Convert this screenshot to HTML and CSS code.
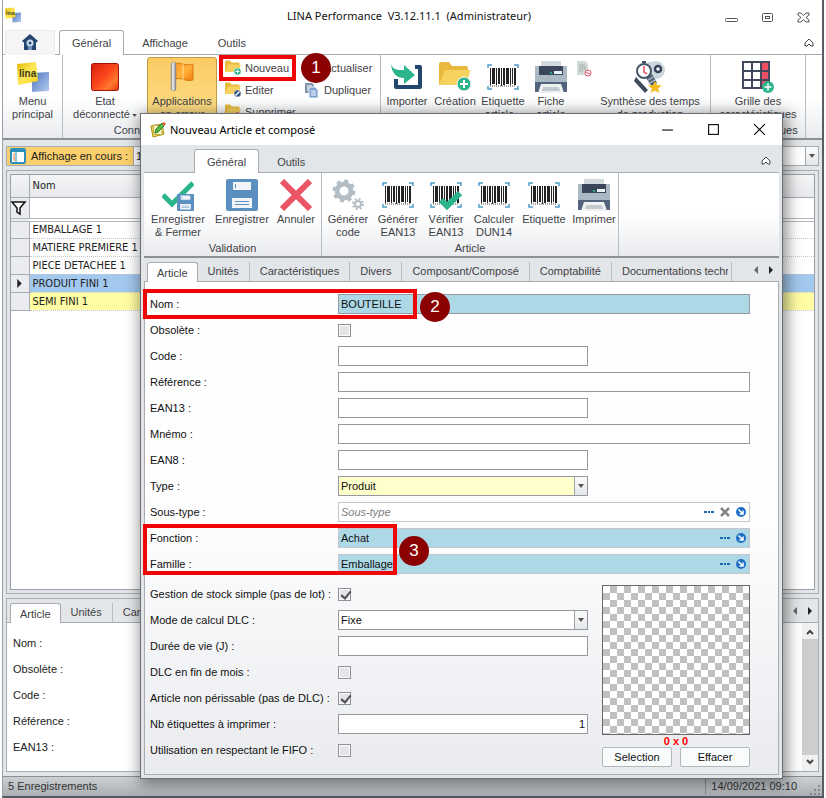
FILE: index.html
```html
<!DOCTYPE html>
<html lang="fr">
<head>
    <meta charset="UTF-8">
    <meta name="viewport" content="width=device-width, initial-scale=1.0">
    <title>LINA Performance</title>
    <link rel="stylesheet" href="styles.css">
</head>
<body>

<!-- Icônes partagées -->
<svg class="sprite" aria-hidden="true">
    <defs>
        <linearGradient id="g-red" x1="0" y1="0" x2="1" y2="1">
            <stop offset="0" stop-color="#d81e0e"/><stop offset=".5" stop-color="#fb4a1c"/><stop offset=".75" stop-color="#ff7a2e"/><stop offset="1" stop-color="#ee3410"/>
        </linearGradient>
        <linearGradient id="g-flag" x1="0" y1="0" x2="1" y2="1">
            <stop offset="0" stop-color="#ff9a1f"/><stop offset=".5" stop-color="#ffb43c"/><stop offset="1" stop-color="#f07c06"/>
        </linearGradient>
        <linearGradient id="g-pole" x1="0" y1="0" x2="1" y2="0">
            <stop offset="0" stop-color="#8d8d8d"/><stop offset=".4" stop-color="#f4f4f4"/><stop offset="1" stop-color="#777"/>
        </linearGradient>
        <linearGradient id="g-yellow" x1="0" y1="0" x2="1" y2="1">
            <stop offset="0" stop-color="#e3b800"/><stop offset=".5" stop-color="#ffe95a"/><stop offset="1" stop-color="#f0cc10"/>
        </linearGradient>
        <linearGradient id="g-blue" x1="0" y1="0" x2="1" y2="1">
            <stop offset="0" stop-color="#4f74bd"/><stop offset="1" stop-color="#b4cdf2"/>
        </linearGradient>
    </defs>
    <symbol id="i-lina" viewBox="0 0 32 32">
        <path d="M15 12l17-1v19l-17 1z" fill="url(#g-blue)"/>
        <path d="M0 3L19 1l2 19-20 4z" fill="url(#g-yellow)"/>
        <text x="2" y="16" font-family="Liberation Sans" font-weight="bold" font-size="10" fill="#3c3d20">lina</text>
    </symbol>
    <symbol id="i-home" viewBox="0 0 16 16">
        <path d="M8 0l8 7-1.500 1.500L14 8v8H2V8l-.5.500L0 7z" fill="#24466e"/>
        <circle cx="8" cy="9" r="3.500" fill="#c8dcf0"/><circle cx="8" cy="9" r="1.500" fill="#24466e"/><path d="M6 12h4v4H6z" fill="#6f94bd"/>
    </symbol>
    <symbol id="i-state" viewBox="0 0 32 32">
        <rect x="2.500" y="2.500" width="27" height="27" rx="2" fill="url(#g-red)" stroke="#9c1408"/>
    </symbol>
    <symbol id="i-flag" viewBox="0 0 32 32">
        <path d="M9 3c5-3 8 3 18 0v16c-8 2-11-3-17-1z" fill="url(#g-flag)" stroke="#d67a10"/>
        <path d="M17 3v16" stroke="#ffd890"/>
        <rect x="5" y="1" width="5" height="29" rx="2.500" fill="url(#g-pole)" stroke="#888" stroke-width=".5"/>
    </symbol>
    <symbol id="i-folder" viewBox="0 0 32 32">
        <path d="M0 3q0-2 2-2h8l3 4h14q2 0 2 2v17H0z" fill="#e8b93c"/>
        <path d="M0 24L6 9h24q2 0 1 2l-4 13z" fill="#f5d25d"/>
    </symbol>
    <symbol id="i-folder-add" viewBox="0 0 32 32">
        <use href="#i-folder"/>
        <circle cx="25" cy="23" r="7" fill="#2cb48c" stroke="#fff"/><path d="M21 23h8M25 19v8" stroke="#fff" stroke-width="2"/>
    </symbol>
    <symbol id="i-folder-edit" viewBox="0 0 32 32">
        <use href="#i-folder"/>
        <circle cx="25" cy="23" r="7" fill="#2f4d86" stroke="#fff"/><path d="M21 27l8-8" stroke="#fff" stroke-width="3"/>
    </symbol>
    <symbol id="i-folder-del" viewBox="0 0 32 32">
        <use href="#i-folder"/>
        <circle cx="25" cy="23" r="7" fill="#e0202c" stroke="#fff"/><path d="M21 23h8" stroke="#fff" stroke-width="2"/>
    </symbol>
    <symbol id="i-copy" viewBox="0 0 16 16">
        <path d="M1 1h7l2 2v8H1z" fill="#8295ad"/><path d="M3 4h5M3 6h5M3 8h3" stroke="#fff"/>
        <path d="M5 5h6l3 3v8H5z" fill="#7da0cf" stroke="#eef3fa"/><path d="M7 9h5M7 11h5M7 13h5" stroke="#fff"/>
    </symbol>
    <symbol id="i-import" viewBox="0 0 32 32">
        <path d="M24 6h5v20H5v-8" fill="none" stroke="#24466e" stroke-width="4" stroke-linejoin="round"/>
        <path d="M0 3c2 6 6 6 13 6V4l11 10-11 9v-6C6 17 1 13 0 3z" fill="#2cb48c"/>
    </symbol>
    <symbol id="i-barcode" viewBox="0 0 32 32">
        <path d="M1 7V4h4M27 4h4v3M1 25v3h4M27 28h4v-3" fill="none" stroke="#4b9cc9" stroke-width="1.500"/>
        <path d="M3 7h1v17H3zM5 7h3v16H5zM9 7h1v17H9zM11 7h2v16h-2zM14 7h1v18h-1zM16 7h2v17h-2zM19 7h3v16h-3zM23 7h1v17h-1zM25 7h1v16h-1zM27 7h2v17h-2z" fill="#222"/>
        <path d="M3 25h26" stroke="#444" stroke-dasharray="1 1"/>
    </symbol>
    <symbol id="i-barcode-ok" viewBox="0 0 32 32">
        <use href="#i-barcode"/>
        <path d="M11 21l6 6 13-13" fill="none" stroke="#2cb48c" stroke-width="6"/>
    </symbol>
    <symbol id="i-printer" viewBox="0 0 32 32">
        <path d="M6 0h20v6H6z" fill="#d3dade"/>
        <path d="M0 5h32v16H0z" fill="#a9b8c3"/><path d="M0 21h32v10H0z" fill="#51647b"/>
        <path d="M4 5h24v9H4z" fill="#39465c"/><path d="M19 10h8v3h-8z" fill="#e9f2f5"/><circle cx="16" cy="12" r="1" fill="#2cc48c"/>
        <path d="M6 23h20l3 9H3z" fill="#eef0f2"/><path d="M8 27h16M7 29h18" stroke="#9aa3ab"/>
    </symbol>
    <symbol id="i-report" viewBox="0 0 16 16">
        <path d="M1 0h8l3 3v11H1z" fill="#d3dbd7"/><path d="M3 4h6M3 6h7M3 8h7M3 10h4" stroke="#a4b0aa"/>
        <circle cx="12" cy="12" r="3" fill="#fff" stroke="#e5566d"/><path d="M10 11l4 2" stroke="#e5566d"/>
    </symbol>
    <symbol id="i-times" viewBox="0 0 32 32">
        <circle cx="22" cy="9" r="9" fill="#ccd7dd"/><path d="M13 1h9l8 12-9 6z" fill="#ccd7dd"/>
        <circle cx="24" cy="8" r="3" fill="#fff" stroke="#34425a" stroke-width="2.500"/>
        <path d="M2 16l12 13-3 3L0 20z" fill="#3f4b5d"/><path d="M12 17l6-4 5 9-5 4z" fill="#55667a"/>
        <path d="M13 20l6-4M14 23l7-4" stroke="#d3dce2"/>
        <circle cx="10" cy="10" r="7" fill="#fff" stroke="#46566a" stroke-width="2"/><path d="M8 1h4M10 1v2" stroke="#46566a" stroke-width="2"/>
        <path d="M10 5v6l3 2" fill="none" stroke="#e6435c" stroke-width="1.500"/>
        <path d="M21 20l2 4 5 .500-4 3 1.500 4.500-4.500-2.500-4.500 2.500 1.500-4.500-4-3 5-.500z" fill="#f3bd22"/>
    </symbol>
    <symbol id="i-grid-add" viewBox="0 0 32 32">
        <path d="M1 1h26v26H1z" fill="#fff"/><path d="M19 1h8v26h-8z" fill="#ee4f62"/>
        <path d="M1 1h26v26H1zM10 1v26M19 1v26M1 10h26M1 19h26" fill="none" stroke="#44485c" stroke-width="2"/>
        <circle cx="26" cy="26" r="6" fill="#2cb48c"/><path d="M22.500 26h7M26 22.500v7" stroke="#fff" stroke-width="1.500"/>
    </symbol>
    <symbol id="i-disk" viewBox="0 0 32 32">
        <rect width="32" height="32" rx="2" fill="#5b8fc0"/>
        <path d="M7 3h18v8H7zM6 19h20v10H6z" fill="#f1f5f8"/><path d="M9 5h1v4H9zM9 22h14v1H9zM9 25h14v1H9z" fill="#5b8fc0"/>
    </symbol>
    <symbol id="i-save-close" viewBox="0 0 32 32">
        <path d="M1 16l9 9L31 4" fill="none" stroke="#2cb48c" stroke-width="5"/>
        <use href="#i-disk" x="15" y="15" width="17" height="17"/>
    </symbol>
    <symbol id="i-cancel" viewBox="0 0 32 32">
        <path d="M2 2l28 28M30 2L2 30" stroke="#ec5565" stroke-width="6"/>
    </symbol>
    <symbol id="i-gears" viewBox="0 0 32 32">
        <circle cx="12" cy="12" r="10" fill="none" stroke="#b4bdc4" stroke-width="3" stroke-dasharray="4 3.850"/>
        <circle cx="12" cy="12" r="7" fill="none" stroke="#b4bdc4" stroke-width="5"/>
        <circle cx="26" cy="25" r="5" fill="none" stroke="#b4bdc4" stroke-width="2" stroke-dasharray="2 1.930"/>
        <circle cx="26" cy="25" r="3" fill="none" stroke="#b4bdc4" stroke-width="2"/>
    </symbol>
    <symbol id="i-note" viewBox="0 0 16 16">
        <path d="M1 4l11-2 2 10-11 3z" fill="#f3df55" stroke="#a98f1a"/><path d="M3 3l9 1v9l-8-1z" fill="#fbf7c4" stroke="#b8a544"/>
        <path d="M5 11l1-4 6-6 2 3-6 6z" fill="#55b948" stroke="#2e7d27"/><path d="M12 1l2-1 2 2-2 2z" fill="#e85c3c"/>
    </symbol>
    <symbol id="i-layout" viewBox="0 0 16 16">
        <rect x="1" y="1" width="14" height="14" rx="1" fill="#fff" stroke="#2c8fb8" stroke-width="2"/>
        <path d="M6 3v11" stroke="#2c8fb8"/><path d="M3 6h2M3 8h2M3 10h2M3 12h2" stroke="#e87b2c"/><path d="M1 3h14" stroke="#2c8fb8" stroke-width="2"/>
    </symbol>
    <symbol id="i-funnel" viewBox="0 0 16 16">
        <path d="M1 2h13L9 8v6l-3-2V8z" fill="#fff" stroke="#111" stroke-width="1.500"/>
    </symbol>
    <symbol id="i-chevron" viewBox="0 0 10 10">
        <path d="M1 5l4-4 4 4v3H7L5 6 3 8H1z" fill="#fff" stroke="#444"/>
    </symbol>
    <symbol id="i-down" viewBox="0 0 6 4"><path d="M0 0h6L3 4z" fill="#555"/></symbol>
    <symbol id="i-left" viewBox="0 0 4 8"><path d="M4 0v8L0 4z" fill="#666"/></symbol>
    <symbol id="i-right" viewBox="0 0 4 8"><path d="M0 0v8l4-4z" fill="#222"/></symbol>
    <symbol id="i-dots" viewBox="0 0 10 10"><path d="M0 4h3v2H0zM4 4h2v2H4zM7 4h3v2H7z" fill="#1d64b4"/></symbol>
    <symbol id="i-clear" viewBox="0 0 10 10"><path d="M1 1l8 8M9 1L1 9" stroke="#858585" stroke-width="2.500"/></symbol>
    <symbol id="i-go" viewBox="0 0 10 10"><circle cx="5" cy="5" r="5" fill="#1e6fc4"/><path d="M2.500 2.500L7 7M7 3.500V7H3.500" fill="none" stroke="#fff" stroke-width="1.500"/></symbol>
</svg>

<div class="app">
    <header class="titlebar">
        <svg class="icon16"><use href="#i-lina"/></svg>
        <h1>LINA Performance  V3.12.11.1  (Administrateur)</h1>
        <div class="window-buttons">
            <button type="button" aria-label="Réduire"><svg viewBox="0 0 13 12"><rect x=".5" y="6.500" width="12" height="3" rx="1" fill="#fff" stroke="#555"/></svg></button>
            <button type="button" aria-label="Agrandir"><svg viewBox="0 0 13 12"><rect x="1.500" y="1.500" width="10" height="8" rx="1" fill="#fff" stroke="#555"/><rect x="4.500" y="4.500" width="4" height="2" fill="none" stroke="#555"/></svg></button>
            <button type="button" aria-label="Fermer"><svg viewBox="0 0 13 12"><path d="M1 1h3l2.500 2.500L9 1h3v2L9 5.500 12 8v2H9L6.500 7.500 4 10H1V8l3-2.500L1 3z" fill="#fff" stroke="#555"/></svg></button>
        </div>
    </header>

    <nav class="ribbon-tabs">
        <a href="#" class="home" aria-label="Accueil"><svg class="icon16"><use href="#i-home"/></svg></a>
        <a href="#" class="active">Général</a>
        <a href="#">Affichage</a>
        <a href="#">Outils</a>
        <button type="button" class="collapse" aria-label="Réduire le ruban"><svg><use href="#i-chevron"/></svg></button>
    </nav>

    <div class="ribbon">
        <div class="group">
            <div class="tools">
                <button type="button" class="tool w59"><svg><use href="#i-lina"/></svg><span>Menu<br>principal</span></button>
            </div>
        </div>
        <div class="group no-line">
            <div class="tools">
                <button type="button" class="tool w84"><svg><use href="#i-state"/></svg><span>Etat<br>déconnecté<svg class="caret"><use href="#i-down"/></svg></span></button>
                <button type="button" class="tool w70 on"><svg><use href="#i-flag"/></svg><span>Applications<br>en erreur</span></button>
            </div>
            <div class="caption">Connexion</div>
        </div>
        <div class="group columns">
            <div class="small-tools">
                <button type="button"><svg><use href="#i-folder-add"/></svg>Nouveau</button>
                <button type="button"><svg><use href="#i-folder-edit"/></svg>Editer</button>
                <button type="button"><svg><use href="#i-folder-del"/></svg>Supprimer</button>
                <i class="frame frame-1"></i>
            </div>
            <div class="small-tools second">
                <button type="button"><svg><use href="#i-copy"/></svg>Actualiser</button>
                <button type="button"><svg><use href="#i-copy"/></svg>Dupliquer</button>
                <b class="step step-1">1</b>
            </div>
        </div>
        <div class="group">
            <div class="tools pad">
                <button type="button" class="tool w48"><svg><use href="#i-import"/></svg><span>Importer</span></button>
                <button type="button" class="tool w48"><svg><use href="#i-folder-add"/></svg><span>Création<br><svg class="caret"><use href="#i-down"/></svg></span></button>
                <button type="button" class="tool w48"><svg><use href="#i-barcode"/></svg><span>Etiquette<br>article<svg class="caret"><use href="#i-down"/></svg></span></button>
                <button type="button" class="tool w48"><svg><use href="#i-printer"/></svg><span>Fiche<br>article</span></button>
                <button type="button" class="tool mini" aria-label="Rapport"><svg><use href="#i-report"/></svg></button>
                <button type="button" class="tool w114"><svg><use href="#i-times"/></svg><span>Synthèse des temps<br>de production</span></button>
            </div>
        </div>
        <div class="group">
            <div class="tools">
                <button type="button" class="tool w94"><svg><use href="#i-grid-add"/></svg><span>Grille des<br>caractéristiques</span></button>
            </div>
            <div class="caption">Caractéristiques</div>
        </div>
    </div>

    <main class="workspace">
        <div class="view-bar">
            <label for="view"><svg class="icon16"><use href="#i-layout"/></svg>Affichage en cours :</label>
            <div class="combo">
                <select id="view"><option>1</option></select>
                <span class="drop"><svg><use href="#i-down"/></svg></span>
            </div>
        </div>

        <div class="list-box">
            <div class="list">
                <table>
                    <thead>
                        <tr class="head"><th></th><th>Nom</th></tr>
                        <tr class="filter"><th><svg class="icon16"><use href="#i-funnel"/></svg></th><td></td></tr>
                    </thead>
                    <tbody>
                        <tr><th></th><td>EMBALLAGE 1</td></tr>
                        <tr><th></th><td>MATIERE PREMIERE 1</td></tr>
                        <tr><th></th><td>PIECE DETACHEE 1</td></tr>
                        <tr class="selected"><th><svg class="mark"><use href="#i-right"/></svg></th><td>PRODUIT FINI 1</td></tr>
                        <tr class="semi"><th></th><td>SEMI FINI 1</td></tr>
                    </tbody>
                </table>
            </div>
        </div>

        <section class="detail">
            <nav class="page-tabs">
                <a href="#" class="active">Article</a>
                <a href="#">Unités</a>
                <a href="#">Caractéristiques</a>
                <span class="tab-arrows"><svg><use href="#i-left"/></svg><svg><use href="#i-right"/></svg></span>
            </nav>
            <div class="detail-body">
                <ul>
                    <li>Nom :</li>
                    <li>Obsolète :</li>
                    <li>Code :</li>
                    <li>Référence :</li>
                    <li>EAN13 :</li>
                </ul>
                <div class="scroll">
                    <svg viewBox="0 0 8 6"><path d="M1 5l3-3 3 3" fill="none" stroke="#444" stroke-width="2"/></svg>
                    <span class="thumb"></span>
                    <svg viewBox="0 0 8 6"><path d="M1 1l3 3 3-3" fill="none" stroke="#444" stroke-width="2"/></svg>
                </div>
            </div>
        </section>
    </main>

    <footer class="status">
        <span>5 Enregistrements</span>
        <time>14/09/2021 09:10</time>
        <svg class="grip" viewBox="0 0 12 12"><path d="M9 1h2v2H9zM5 5h2v2H5zM9 5h2v2H9zM1 9h2v2H1zM5 9h2v2H5zM9 9h2v2H9z" fill="#85898f"/></svg>
    </footer>
</div>

<div class="dialog" role="dialog" aria-labelledby="dialog-title">
    <header class="dialog-title">
        <svg class="icon16"><use href="#i-note"/></svg>
        <h2 id="dialog-title">Nouveau Article et composé</h2>
        <div class="dialog-buttons">
            <button type="button" aria-label="Réduire"><svg viewBox="0 0 12 12"><path d="M1 6.500h10" stroke="#000"/></svg></button>
            <button type="button" aria-label="Agrandir"><svg viewBox="0 0 12 12"><rect x="1.500" y="1.500" width="9" height="9" fill="none" stroke="#000"/></svg></button>
            <button type="button" aria-label="Fermer"><svg viewBox="0 0 12 12"><path d="M1 1l10 10M11 1L1 11" stroke="#000"/></svg></button>
        </div>
    </header>

    <nav class="ribbon-tabs">
        <a href="#" class="active">Général</a>
        <a href="#">Outils</a>
        <button type="button" class="collapse" aria-label="Réduire le ruban"><svg><use href="#i-chevron"/></svg></button>
    </nav>

    <div class="ribbon">
        <div class="group">
            <div class="tools pad">
                <button type="button" class="tool w64"><svg><use href="#i-save-close"/></svg><span>Enregistrer<br>&amp; Fermer</span></button>
                <button type="button" class="tool w64"><svg><use href="#i-disk"/></svg><span>Enregistrer</span></button>
                <button type="button" class="tool w44"><svg><use href="#i-cancel"/></svg><span>Annuler</span></button>
            </div>
            <div class="caption">Validation</div>
        </div>
        <div class="group">
            <div class="tools">
                <button type="button" class="tool w52"><svg><use href="#i-gears"/></svg><span>Générer<br>code</span></button>
                <button type="button" class="tool w48"><svg><use href="#i-barcode"/></svg><span>Générer<br>EAN13</span></button>
                <button type="button" class="tool w48"><svg><use href="#i-barcode-ok"/></svg><span>Vérifier<br>EAN13</span></button>
                <button type="button" class="tool w48"><svg><use href="#i-barcode"/></svg><span>Calculer<br>DUN14</span></button>
                <button type="button" class="tool w52"><svg><use href="#i-barcode"/></svg><span>Etiquette</span></button>
                <button type="button" class="tool w48"><svg><use href="#i-printer"/></svg><span>Imprimer</span></button>
            </div>
            <div class="caption">Article</div>
        </div>
    </div>

    <nav class="page-tabs">
        <a href="#" class="active">Article</a>
        <a href="#">Unités</a>
        <a href="#">Caractéristiques</a>
        <a href="#">Divers</a>
        <a href="#">Composant/Composé</a>
        <a href="#">Comptabilité</a>
        <a href="#" class="cut"><span>Documentations techniques</span></a>
        <span class="tab-arrows"><svg><use href="#i-left"/></svg><svg><use href="#i-right"/></svg></span>
    </nav>

    <form class="page">
        <div class="fields">
            <label for="nom">Nom :</label>
            <input id="nom" class="text key" type="text" value="BOUTEILLE">
            <label for="obsolete">Obsolète :</label>
            <input id="obsolete" type="checkbox">
            <label for="code">Code :</label>
            <input id="code" class="text short" type="text">
            <label for="reference">Référence :</label>
            <input id="reference" class="text" type="text">
            <label for="ean13">EAN13 :</label>
            <input id="ean13" class="text short" type="text">
            <label for="mnemo">Mnémo :</label>
            <input id="mnemo" class="text" type="text">
            <label for="ean8">EAN8 :</label>
            <input id="ean8" class="text short" type="text">
            <label for="type">Type :</label>
            <div class="combo short pale">
                <select id="type"><option>Produit</option></select>
                <span class="drop"><svg><use href="#i-down"/></svg></span>
            </div>
            <label for="sous-type">Sous-type :</label>
            <div class="lookup">
                <input id="sous-type" type="text" placeholder="Sous-type">
                <button type="button" aria-label="Choisir"><svg><use href="#i-dots"/></svg></button>
                <button type="button" aria-label="Effacer"><svg><use href="#i-clear"/></svg></button>
                <button type="button" aria-label="Ouvrir"><svg><use href="#i-go"/></svg></button>
            </div>
            <label for="fonction">Fonction :</label>
            <div class="lookup key">
                <input id="fonction" type="text" value="Achat">
                <button type="button" aria-label="Choisir"><svg><use href="#i-dots"/></svg></button>
                <button type="button" aria-label="Ouvrir"><svg><use href="#i-go"/></svg></button>
            </div>
            <label for="famille">Famille :</label>
            <div class="lookup key">
                <input id="famille" type="text" value="Emballage">
                <button type="button" aria-label="Choisir"><svg><use href="#i-dots"/></svg></button>
                <button type="button" aria-label="Ouvrir"><svg><use href="#i-go"/></svg></button>
            </div>
            <i class="frame frame-2"></i>
            <b class="step step-2">2</b>
            <i class="frame frame-3"></i>
            <b class="step step-3">3</b>
        </div>

        <div class="lower">
            <div class="fields">
                <label for="stock">Gestion de stock simple (pas de lot) :</label>
                <input id="stock" type="checkbox" checked>
                <label for="calcul">Mode de calcul DLC :</label>
                <div class="combo">
                    <select id="calcul"><option>Fixe</option></select>
                    <span class="drop"><svg><use href="#i-down"/></svg></span>
                </div>
                <label for="duree">Durée de vie (J) :</label>
                <input id="duree" class="text" type="text">
                <label for="fin-mois">DLC en fin de mois :</label>
                <input id="fin-mois" type="checkbox">
                <label for="perissable">Article non périssable (pas de DLC) :</label>
                <input id="perissable" type="checkbox" checked>
                <label for="etiquettes">Nb étiquettes à imprimer :</label>
                <input id="etiquettes" class="text number" type="text" value="1">
                <label for="fifo">Utilisation en respectant le FIFO :</label>
                <input id="fifo" type="checkbox">
            </div>
            <div class="picture">
                <div class="preview"></div>
                <strong>0 x 0</strong>
                <div class="picture-buttons">
                    <button type="button">Selection</button>
                    <button type="button">Effacer</button>
                </div>
            </div>
        </div>
    </form>
</div>

</body>
</html>
```
FILE: styles.css
```css
/* Base */
* {
    margin: 0;
    padding: 0;
    box-sizing: border-box;
}

body {
    font-family: "Liberation Sans", Arial, sans-serif;
    font-size: 11px;
    line-height: 13px;
    color: #222;
    background: #fff;
    position: relative;
}

button, input, select {
    font: inherit;
    color: inherit;
    border: none;
    background: none;
}

a {
    color: inherit;
    text-decoration: none;
}

svg { display: block; }
.sprite { position: absolute; width: 0; height: 0; }
.icon16 { width: 16px; height: 16px; flex: none; }

/* Fenêtre principale */
.app {
    min-height: 100vh;
    display: flex;
    flex-direction: column;
    border: 1px solid #9a9ea6;
    border-top: none;
    border-right: 2px solid #5a5e64;
    border-bottom: 2px solid #54585e;
    margin: 0 2px 0 2px;
}

.titlebar {
    display: flex;
    align-items: center;
    height: 30px;
    padding: 0 12px 0 2px;
}

.titlebar h1 {
    flex: 1;
    text-align: center;
    white-space: pre;
    font: 11px "Noto Sans", sans-serif;
    color: #111;
    padding-left: 72px;
}

.window-buttons { display: flex; gap: 23px; padding-top: 5px; }
.window-buttons svg { width: 13px; height: 12px; }

/* Onglets du ruban */
.ribbon-tabs {
    display: flex;
    height: 25px;
    margin-bottom: -1px;
    color: #3f4247;
    position: relative;
}

.ribbon-tabs a {
    padding: 5px 14px 0;
    border: 1px solid transparent;
    border-bottom: none;
    line-height: 14px;
}

.ribbon-tabs .home {
    padding: 3px 16px 0;
    margin: 0 4px 0 2px;
    background: #f5f5f6;
    border-color: #ececee;
}

.ribbon-tabs .active {
    padding: 5px 12px 0;
    margin-right: 3px;
    background: #fff;
    border-color: #a8acb2;
    border-radius: 3px 3px 0 0;
}

.collapse { margin-left: auto; padding-right: 8px; }
.collapse svg { width: 10px; height: 10px; }

/* Ruban */
.ribbon {
    display: flex;
    height: 86px;
    border-top: 1px solid #a8acb2;
    border-bottom: 2px solid #8c9096;
    background: linear-gradient(#fff 0, #fff 50%, #e9ebee 100%);
    color: #3f4247;
}

.group {
    display: flex;
    flex-direction: column;
    border-right: 1px solid #b9bdc3;
    flex: none;
}

.group.columns { flex-direction: row; }
.group.no-line { border-right-color: transparent; }
.tools { display: flex; }
.tools.pad { padding: 0 3px 0 2px; }

.tool {
    display: flex;
    flex-direction: column;
    align-items: center;
    height: 66px;
    margin-top: 2px;
    padding-top: 3px;
    border: 1px solid transparent;
    border-radius: 3px;
    white-space: nowrap;
}

.tool > svg { width: 32px; height: 32px; flex: none; }
.tool span { padding-top: 2px; }

.tool.on {
    background: linear-gradient(#fbcb63, #fde08a);
    border-color: #c29b45;
}

.tool.mini > svg { width: 16px; height: 16px; }

.caret {
    display: inline-block;
    width: 5px;
    height: 3px;
    margin-left: 2px;
    vertical-align: middle;
}

.w44 { width: 44px; }
.w48 { width: 48px; }
.w52 { width: 52px; }
.w59 { width: 59px; }
.w64 { width: 64px; }
.w70 { width: 70px; }
.w84 { width: 84px; }
.w94 { width: 94px; }
.w114 { width: 114px; }

.caption {
    text-align: center;
    line-height: 14px;
}

.small-tools {
    position: relative;
    display: flex;
    flex-direction: column;
    width: 84px;
    padding: 2px 0 0 7px;
}

.small-tools.second { width: 78px; padding-left: 2px; }

.small-tools button {
    display: flex;
    align-items: center;
    gap: 4px;
    height: 22px;
}

.small-tools svg { width: 16px; height: 16px; }

/* Espace de travail */
.workspace {
    flex: 1;
    display: flex;
    flex-direction: column;
    gap: 4px;
    padding: 6px 3px 4px;
    background: #e3e6e8;
}

.view-bar {
    display: flex;
    height: 20px;
    border: 1px solid #a8acb2;
}

.view-bar label {
    display: flex;
    align-items: center;
    gap: 5px;
    padding: 0 5px 0 3px;
    background: #fbd06c;
    border-right: 1px solid #a8acb2;
}

.combo {
    display: flex;
    background: #fff;
    flex: 1;
}

.combo select {
    appearance: none;
    flex: 1;
    min-width: 0;
    padding-left: 2px;
}

.drop {
    display: flex;
    align-items: center;
    justify-content: center;
    width: 13px;
    border-left: 1px solid #a0a4aa;
    background: linear-gradient(#fafbfb, #e4e7ea);
}

.drop svg { width: 6px; height: 4px; }

.list-box {
    flex: 1;
    display: flex;
    padding: 3px;
    border: 1px solid #a8acb2;
}

.list {
    flex: 1;
    background: #fff;
    border: 1px solid #9a9ea6;
}

table {
    width: 100%;
    border-collapse: collapse;
    font: 11px "DejaVu Sans Condensed", "DejaVu Sans", sans-serif;
}

th, td {
    height: 18px;
    padding: 0 3px;
    text-align: left;
    font-weight: normal;
    border-bottom: 1px dotted #c4c8cc;
}

th:first-child {
    width: 18px;
    padding: 0;
    background: #eaecef;
    border-right: 1px solid #a8acb2;
    border-bottom: 1px solid #a8acb2;
}

.head th {
    height: 22px;
    background: linear-gradient(#f3f4f6, #e6e8eb);
    border-bottom: 1px solid #a8acb2;
}

.filter td, .filter th { height: 23px; border-bottom: 4px double #b4b8bd; }
.mark { width: 5px; height: 9px; margin-left: 6px; }
.selected td { background: #a3c8ee; }
.semi td { background: #fffda3; }

/* Onglets de page */
.page-tabs {
    display: flex;
    align-items: flex-end;
    height: 24px;
    padding-left: 3px;
    color: #3f4247;
    border-bottom: 1px solid #a8acb2;
}

.page-tabs a {
    height: 19px;
    padding: 3px 10px 0;
    border-right: 1px solid #b9bdc3;
    white-space: nowrap;
}

.page-tabs .active {
    height: 20px;
    margin-bottom: -1px;
    padding: 4px 9px 0;
    background: #fff;
    border: 1px solid #a8acb2;
    border-bottom: none;
    border-radius: 3px 3px 0 0;
}

.page-tabs .cut {
    width: 120px;
    min-width: 0;
    padding-right: 3px;
}

.cut span { display: block; overflow: hidden; }

.tab-arrows {
    display: flex;
    gap: 11px;
    margin-left: auto;
    padding: 0 6px 7px 0;
}

.tab-arrows svg { width: 4px; height: 8px; }

.detail {
    border: 1px solid #a8acb2;
}

.detail-body {
    display: flex;
    justify-content: space-between;
    background: #fff;
}

.detail ul {
    list-style: none;
    padding: 7px 6px 11px;
}

.detail li { height: 26px; line-height: 26px; }

.scroll {
    display: flex;
    flex-direction: column;
    align-items: center;
    gap: 4px;
    width: 16px;
    padding: 6px 0;
    background: #f0f0f0;
}

.scroll svg { width: 8px; height: 6px; }
.thumb { flex: 1; width: 100%; background: #cdcdcd; }

.status {
    display: flex;
    align-items: center;
    height: 20px;
    padding: 0 1px 0 5px;
    border-top: 1px solid #8c9096;
    background: linear-gradient(#ccd0d3, #abafb3);
    color: #333;
}

.status time {
    margin-left: auto;
    padding: 2px 12px 2px 5px;
    border-left: 1px solid #8c9096;
}

.grip { width: 12px; height: 12px; align-self: flex-end; }

/* Fenêtre de saisie */
.dialog {
    position: absolute;
    top: 113px;
    left: 140px;
    right: 43px;
    padding: 0 3px 3px;
    border: 1px solid #6b6f75;
    background: #e3e6e8;
    box-shadow: 2px 3px 14px 2px rgba(0, 0, 0, .45);
}

.dialog-title {
    display: flex;
    align-items: center;
    gap: 4px;
    height: 31px;
    margin: 0 -3px;
    padding: 0 16px 0 9px;
    background: #fff;
}

.dialog-title h2 {
    flex: 1;
    font: 11px "Noto Sans", sans-serif;
    color: #000;
}

.dialog-buttons { display: flex; gap: 33px; }
.dialog-buttons svg { width: 13px; height: 13px; }

.dialog .ribbon-tabs { height: 28px; padding: 4px 0 0 50px; }

.page {
    padding: 12px 28px 7px 5px;
    border: 1px solid #a8acb2;
    border-top: none;
    background: linear-gradient(#fff 0, #fdfdfe 50%, #e9ebee 100%);
}

.fields {
    position: relative;
    flex: 1;
    display: grid;
    grid-template-columns: 188px 1fr;
    grid-auto-rows: 20px;
    gap: 6px 0;
    align-items: center;
    color: #111;
}

.text, .fields .combo {
    width: 100%;
    height: 20px;
    padding: 0 2px;
    background: #fff;
    border: 1px solid #96999e;
}

.fields .combo { padding: 0; }
.fields .short { width: 250px; }
.fields .pale { background: #ffffcc; }
.number { text-align: right; }
.fields .key { background: #add8e6; }

.lookup {
    display: flex;
    align-items: center;
    height: 20px;
    padding: 0 0 0 2px;
    border: 1px solid #c8c4cc;
    background: #fff;
}

.lookup input { flex: 1; min-width: 0; }
.lookup input::placeholder { font-style: italic; color: #808080; }
.lookup button { width: 16px; padding: 0 3px; }
.lookup svg { width: 10px; height: 10px; }

input[type="checkbox"] {
    appearance: none;
    width: 13px;
    height: 13px;
    border: 1px solid #8e9196;
    background: #e4e5e7;
    box-shadow: inset 0 0 0 1px #fafafa;
}

input[type="checkbox"]:checked::before {
    content: "";
    display: block;
    width: 4px;
    height: 8px;
    margin: 0 0 0 4px;
    border: solid #4d4f55;
    border-width: 0 2px 2px 0;
    transform: rotate(40deg);
}

.lower {
    display: flex;
    gap: 14px;
    margin-top: 10px;
}

.picture { width: 148px; text-align: center; }

.preview {
    height: 150px;
    margin-top: 1px;
    border: 1px solid #66696e;
    background: repeating-conic-gradient(#c0c0c0 0 25%, #fff 0 50%) 0 0 / 14px 14px;
}

.picture strong {
    display: block;
    line-height: 12px;
    color: #f00;
}

.picture-buttons { display: flex; gap: 8px; }

.picture-buttons button {
    flex: 1;
    height: 20px;
    background: #fafcfc;
    border: 1px solid #b0b8be;
    border-radius: 2px;
    color: #111;
}

/* Repères numérotés */
.frame {
    position: absolute;
    border: 4px solid #f00505;
    pointer-events: none;
}

.frame-1 { top: 0; left: 1px; width: 77px; height: 26px; }
.frame-2 { top: -5px; left: -7px; width: 274px; height: 30px; }
.frame-3 { top: 230px; left: -7px; width: 254px; height: 51px; }

.step {
    position: absolute;
    width: 30px;
    height: 30px;
    border-radius: 50%;
    background: #8b0000;
    color: #fff;
    font-size: 17px;
    font-weight: normal;
    line-height: 30px;
    text-align: center;
}

.step-1 { top: -2px; left: -1px; }
.step-2 { top: -2px; left: 270px; }
.step-3 { top: 242px; left: 249px; }
```
